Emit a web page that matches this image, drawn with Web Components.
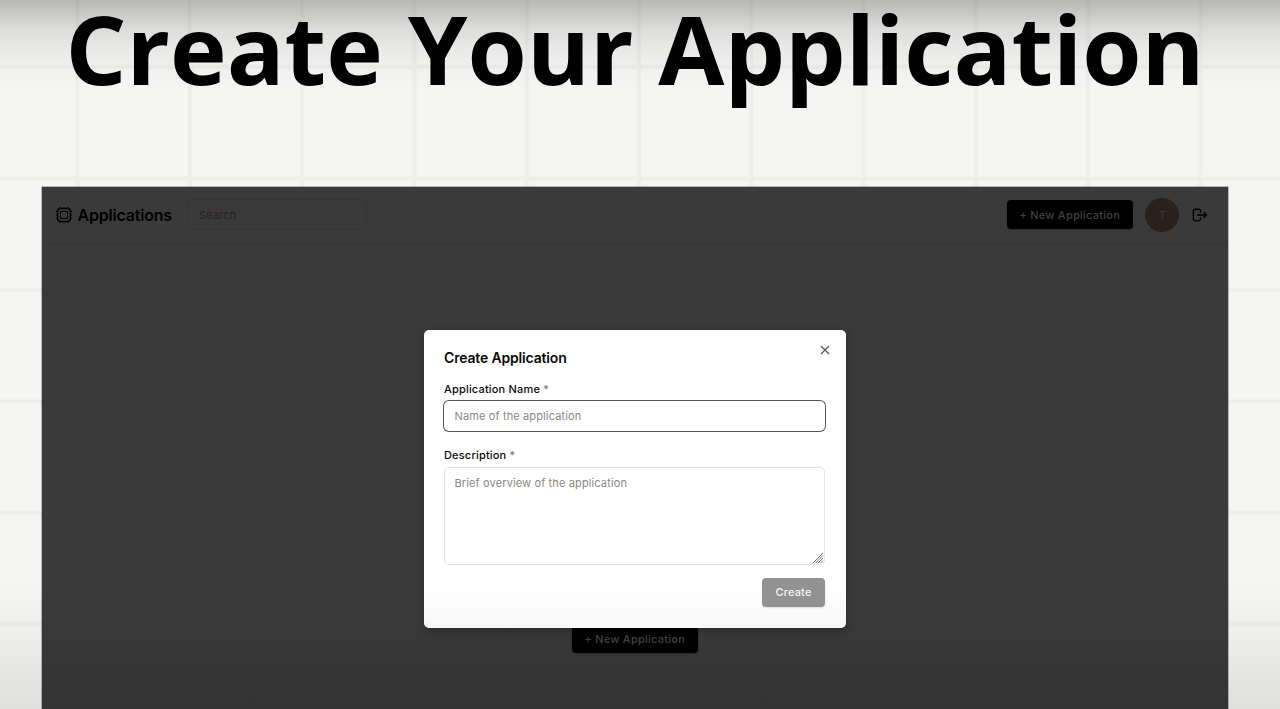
<!DOCTYPE html>
<html lang="en">
<head>
<meta charset="utf-8">
<title>Create Your Application</title>
<style>
  body {
    margin: 0;
    height: 709px;
    overflow: hidden;
    font-family: Inter, "Liberation Sans", sans-serif;
  }
</style>
</head>
<body>
<paper-slide>
  <span slot="title">Create Your Application</span>
  <app-window>
    <app-header slot="header"></app-header>
    <new-button slot="empty">+ New Application</new-button>
    <create-dialog slot="dialog">
      <span slot="title">Create Application</span>
      <form-field label="Application Name" active>Name of the application</form-field>
      <form-field label="Description" multiline>Brief overview of the application</form-field>
    </create-dialog>
  </app-window>
</paper-slide>

<script>
function define(name, html) {
  customElements.define(
    name,
    class extends HTMLElement {
      constructor() {
        super();
        this.attachShadow({ mode: "open" });
        this.shadowRoot.innerHTML = html;
      }
    }
  );
}

define("paper-slide", `
  <style>
    :host {
      display: flex;
      flex-direction: column;
      align-items: flex-start;
      height: 709px;
      background:
        linear-gradient(rgba(0, 0, 0, .25) 0, rgba(0, 0, 0, .2) 10px, rgba(0, 0, 0, .11) 27px, rgba(0, 0, 0, .05) 48px, rgba(0, 0, 0, .02) 68px, transparent 90px),
        linear-gradient(transparent 580px, rgba(0, 0, 0, .035) 640px, rgba(0, 0, 0, .09) 709px),
        linear-gradient(90deg, transparent, #ededec 2px 4px, transparent 6px) 74.500px 0 / 112.3px 100%,
        linear-gradient(transparent, #ededec 2px 4px, transparent 6px) 0 64px / 100% 111.4px,
        #f5f5f3;
    }
    h1 {
      flex: none;
      box-sizing: border-box;
      height: 187px;
      margin: 0;
      padding-left: 65.5px;
      font: 700 95.85px/96px "Open Sans", "Noto Sans", sans-serif;
      white-space: nowrap;
      color: #000;
    }
  </style>
  <h1><slot name="title"></slot></h1>
  <slot></slot>
`);

define("app-window", `
  <style>
    :host {
      display: flex;
      flex-direction: column;
      position: relative;
      box-sizing: border-box;
      width: 1185.5px;
      height: 522px;
      margin-left: 42px;
      background: linear-gradient(#3a3a3a 430px, #373737 460px, #343434 522px);
      box-shadow: 0 0 0 .5px #777;
    }
    .empty {
      flex: 1;
      display: flex;
      flex-direction: column;
      justify-content: flex-end;
      align-items: center;
      padding-bottom: 56px;
    }
    .overlay {
      position: absolute;
      inset: 0;
      display: flex;
      justify-content: center;
      align-items: flex-start;
      padding: 143px .5px 0 0;
    }
  </style>
  <slot name="header"></slot>
  <div class="empty"><slot name="empty"></slot></div>
  <div class="overlay"><slot name="dialog"></slot></div>
`);

define("new-button", `
  <style>
    :host {
      display: flex;
      align-items: center;
      justify-content: center;
      width: 125.5px;
      height: 29px;
      border-radius: 4px;
      background: #000;
      color: #443f3c;
      font-size: 11px;
      font-weight: 450;
      letter-spacing: .25px;
      white-space: nowrap;
      box-shadow: 0 1px 2px rgba(0, 0, 0, .3);
    }
  </style>
  <slot></slot>
`);

define("app-header", `
  <style>
    :host {
      display: flex;
      align-items: center;
      box-sizing: border-box;
      height: 58px;
      padding: 0 19.5px 2px 14px;
      border-bottom: 1px solid #353535;
    }
    .name {
      margin-left: 5.5px;
      width: 110px;
      font-size: 16px;
      font-weight: 600;
      letter-spacing: -.2px;
      color: #000;
    }
    .search {
      display: flex;
      align-items: center;
      box-sizing: border-box;
      width: 179px;
      height: 31px;
      padding-left: 10.5px;
      border: 1px solid #353535;
      border-radius: 5px;
      font-size: 11px;
      letter-spacing: .15px;
      color: #2a211d;
    }
    new-button {
      margin-left: auto;
    }
    .avatar {
      display: flex;
      align-items: center;
      justify-content: center;
      width: 34px;
      height: 34px;
      margin: 0 13px 0 12.5px;
      border-radius: 50%;
      background: #2a211d;
      color: #413630;
      font-size: 11px;
    }
    svg {
      display: block;
      flex: none;
      fill: none;
      stroke: #000;
    }
  </style>
  <svg width="16" height="16" viewBox="0 0 16 16">
    <rect x="1.600" y="1.600" width="12.800" height="12.800" rx="2.8" stroke-width="1.5"/>
    <rect x="4.500" y="4.500" width="7" height="7" rx=".5" stroke-width="1.1"/>
    <path d="M4.500 0v2M8 0v2M11.500 0v2M4.500 14v2M8 14v2M11.500 14v2M0 4.500h2M0 8h2M0 11.500h2M14 4.500h2M14 8h2M14 11.500h2" stroke-width="1.1"/>
  </svg>
  <span class="name">Applications</span>
  <div class="search">Search</div>
  <new-button>+ New Application</new-button>
  <div class="avatar">T</div>
  <svg width="16" height="14" viewBox="0 0 16 14" stroke-width="1.35" stroke-linecap="round" stroke-linejoin="round">
    <path d="M8.500 4V3Q8.500 1.200 6.700 1.200H3.200Q1.400 1.200 1.400 3V11Q1.400 12.800 3.200 12.800H6.700Q8.500 12.800 8.500 11V10"/>
    <path d="M5.500 7H14.500M12 4.500L14.500 7L12 9.500"/>
  </svg>
`);

define("create-dialog", `
  <style>
    :host {
      display: flex;
      flex-direction: column;
      position: relative;
      box-sizing: border-box;
      width: 422px;
      height: 298px;
      padding: 18px 20.5px 20px 20.5px;
      border-radius: 5px;
      background: linear-gradient(#fff 255px, #f8f8f7);
      box-shadow: 0 3px 8px rgba(0, 0, 0, .25);
    }
    h2 {
      margin: 0 0 11px;
      font-size: 14px;
      line-height: 20px;
      font-weight: 600;
      letter-spacing: -.17px;
      color: #0c0a09;
    }
    .close {
      position: absolute;
      top: 14px;
      right: 14.5px;
    }
    button {
      align-self: flex-end;
      flex: none;
      width: 63px;
      height: 29px;
      margin-top: 12.5px;
      padding: 0;
      border: 0;
      border-radius: 4px;
      background: #929292;
      color: #f5f5f5;
      font: 500 11px Inter, "Liberation Sans", sans-serif;
      letter-spacing: .2px;
      box-shadow: 0 1px 2px rgba(0, 0, 0, .12);
    }
  </style>
  <h2><slot name="title"></slot></h2>
  <svg class="close" width="12" height="12" viewBox="0 0 12 12" fill="none" stroke="#555" stroke-width="1.15">
    <path d="M2 2L10 10M10 2L2 10"/>
  </svg>
  <slot></slot>
  <button>Create</button>
`);

customElements.define(
  "form-field",
  class extends HTMLElement {
    constructor() {
      super();
      this.attachShadow({ mode: "open" });
    }

    connectedCallback() {
      const multiline = this.hasAttribute("multiline");
      this.shadowRoot.innerHTML = `
        <style>
          :host {
            display: flex;
            flex: none;
            flex-direction: column;
            gap: 2px;
          }
          :host([multiline]) {
            margin-top: 14px;
          }
          label {
            font-size: 11px;
            line-height: 20px;
            font-weight: 500;
            letter-spacing: .18px;
            color: #0c0a09;
          }
          label span {
            color: #78716c;
            font-weight: 400;
          }
          .box {
            position: relative;
            box-sizing: border-box;
            height: 30px;
            padding: 0 9.5px;
            border: 1px solid #e4e4e3;
            border-radius: 5px;
            font-size: 11px;
            line-height: 29px;
            letter-spacing: .13px;
            color: #8b8785;
          }
          :host([active]) .box {
            border-color: transparent;
            box-shadow: 0 0 0 1px #555;
          }
          :host([multiline]) .box {
            height: 98px;
            line-height: 30px;
          }
          svg {
            position: absolute;
            right: 0;
            bottom: 0;
          }
        </style>
        <label>${this.getAttribute("label")} <span>*</span></label>
        <div class="box">
          <slot></slot>
          ${multiline ? `
          <svg width="12" height="12" viewBox="0 0 12 12" stroke="#777" stroke-width="1">
            <path d="M1 11L11 1M3.500 11L11 3.500M6 11L11 6M8.500 11L11 8.500"/>
          </svg>` : ""}
        </div>
      `;
    }
  }
);
</script>
</body>
</html>
